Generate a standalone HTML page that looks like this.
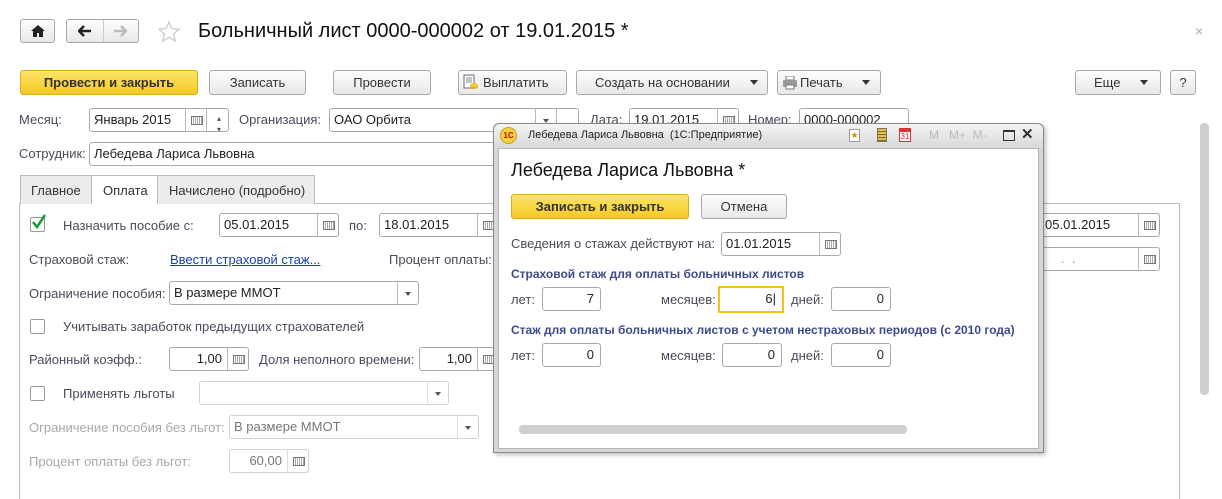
<!DOCTYPE html>
<html style="width:1222px;height:499px;overflow:hidden"><head><meta charset="utf-8"><style>
*{box-sizing:border-box;margin:0;padding:0}
body{width:1222px;height:499px;background:#fff;font-family:"Liberation Sans",Arial,sans-serif;font-size:13px;color:#4a4a5a;position:relative;overflow:hidden}
.a{position:absolute;white-space:nowrap}
.btn{position:absolute;height:25px;border:1px solid #a8a8a8;border-radius:3px;background:linear-gradient(#fdfdfd,#e8e8e8);color:#333;text-align:center;line-height:23px;font-size:13px}
.y{background:linear-gradient(#fde568,#f5c924);border-color:#d9ae1a;font-weight:bold;color:#333}
.in{position:absolute;height:24px;border:1px solid #a8a8a8;border-radius:3px;background:#fff;color:#222;line-height:22px;padding-left:4px;overflow:hidden}
.cal{position:absolute;top:0;right:0;width:21px;height:22px;border-left:1px solid #b8b8b8}
.cal:after{content:"";position:absolute;left:5px;top:7px;width:10px;height:7px;border:1px solid #777;background:repeating-linear-gradient(90deg,#fff 0 1px,#aaa 1px 2px)}
.dd{position:absolute;top:0;right:0;width:21px;height:22px;border-left:1px solid #b8b8b8}
.dd:after{content:"";position:absolute;left:7px;top:10px;border:3px solid transparent;border-top:4px solid #555}
.r{text-align:right;padding-right:26px}
.cb{position:absolute;width:15px;height:15px;border:1px solid #999;border-radius:2px;background:#fff}
.dis{color:#a8a8a8}
.dis .in,.in.dis{border-color:#d0d0d0;color:#777}
.h{color:#3f4a8a;font-weight:bold;font-size:12px}
.n{text-align:right;padding-right:6px}
</style></head><body>
<div class="btn" style="left:20px;top:19px;width:35px;height:24px"><svg width="14" height="12" viewBox="0 0 14 12" style="margin-top:5px"><path d="M7 0L0 6h2v6h4V8h2v4h4V6h2z" fill="#222"/></svg></div>
<div class="btn" style="left:66px;top:19px;width:73px;height:24px"></div>
<div class="a" style="left:103px;top:20px;width:1px;height:22px;background:#ccc"></div>
<svg class="a" style="left:78px;top:25px" width="14" height="12"><path d="M1 6h12M6 1L1 6l5 5" stroke="#222" stroke-width="2.5" fill="none"/></svg>
<svg class="a" style="left:113px;top:25px" width="14" height="12"><path d="M1 6h12M8 1l5 5-5 5" stroke="#bbb" stroke-width="2.5" fill="none"/></svg>
<svg class="a" style="left:157px;top:20px" width="24" height="24"><path d="M12 2l2.9 6.6 7.1.7-5.4 4.8 1.6 7-6.2-3.7-6.2 3.7 1.6-7L2 9.3l7.1-.7z" fill="none" stroke="#ccc" stroke-width="1.3"/></svg>
<div class="a" style="left:198px;top:20px;font-size:20px;color:#111">Больничный лист 0000-000002 от 19.01.2015 *</div>
<div class="a" style="left:1195px;top:23px;color:#aaa;font-size:14px">×</div>
<div class="btn y" style="left:20px;top:70px;width:178px">Провести и закрыть</div>
<div class="btn" style="left:209px;top:70px;width:97px">Записать</div>
<div class="btn" style="left:333px;top:70px;width:98px">Провести</div>
<div class="btn" style="left:458px;top:70px;width:109px;text-align:left;padding-left:24px">Выплатить</div>
<svg class="a" style="left:463px;top:74px" width="16" height="17"><rect x="1" y="1" width="10" height="13" fill="#fff" stroke="#667"/><path d="M3 4h6M3 6h6M3 8h6" stroke="#889"/><ellipse cx="11" cy="13" rx="4" ry="2" fill="#e0b020"/><ellipse cx="11" cy="11" rx="4" ry="2" fill="#f3c830"/></svg>
<div class="btn" style="left:576px;top:70px;width:192px;text-align:left;padding-left:18px">Создать на основании</div>
<div class="a" style="left:750px;top:80px;border:4px solid transparent;border-top:5px solid #333"></div>
<div class="btn" style="left:777px;top:70px;width:104px;text-align:left;padding-left:22px">Печать</div>
<svg class="a" style="left:782px;top:76px" width="16" height="14"><rect x="4" y="0" width="8" height="4" fill="#fff" stroke="#777"/><rect x="1" y="4" width="14" height="7" rx="1" fill="#999"/><rect x="4" y="9" width="8" height="4" fill="#fff" stroke="#777"/></svg>
<div class="a" style="left:862px;top:80px;border:4px solid transparent;border-top:5px solid #333"></div>
<div class="btn" style="left:1075px;top:70px;width:86px;text-align:left;padding-left:18px">Еще</div>
<div class="a" style="left:1140px;top:80px;border:4px solid transparent;border-top:5px solid #333"></div>
<div class="btn" style="left:1170px;top:70px;width:26px">?</div>
<div class="a" style="left:19px;top:112px">Месяц:</div>
<div class="in" style="left:89px;top:108px;width:140px">Январь 2015<div class="cal" style="right:21px;border-right:1px solid #b8b8b8;width:22px"></div><div class="a" style="right:7px;top:-1px;font-size:8px;color:#555">▴</div><div class="a" style="right:7px;top:10px;font-size:8px;color:#555">▾</div></div>
<div class="a" style="left:239px;top:112px">Организация:</div>
<div class="in" style="left:329px;top:108px;width:250px">ОАО Орбита<div class="dd" style="right:22px"></div><div class="a" style="right:0;top:0;width:22px;height:22px;border-left:1px solid #b8b8b8"></div></div>
<div class="a" style="left:590px;top:112px">Дата:</div>
<div class="in" style="left:629px;top:108px;width:110px">19.01.2015<div class="cal"></div></div>
<div class="a" style="left:748px;top:112px">Номер:</div>
<div class="in" style="left:799px;top:108px;width:110px">0000-000002</div>
<div class="a" style="left:19px;top:146px">Сотрудник:</div>
<div class="in" style="left:89px;top:142px;width:420px">Лебедева Лариса Львовна</div>
<div class="a" style="left:19px;top:203px;width:1161px;height:296px;border:1px solid #bbb;border-bottom:none"></div>
<div class="a" style="left:20px;top:175px;width:72px;height:29px;background:#ececec;border:1px solid #bbb;border-bottom:none;padding:7px 0 0 10px;color:#333">Главное</div>
<div class="a" style="left:91px;top:175px;width:67px;height:29px;background:#fff;border:1px solid #bbb;border-bottom:none;padding:7px 0 0 11px;color:#333">Оплата</div>
<div class="a" style="left:157px;top:175px;width:158px;height:29px;background:#ececec;border:1px solid #bbb;border-bottom:none;padding:7px 0 0 11px;color:#333">Начислено (подробно)</div>
<div class="cb" style="left:30px;top:217px"></div>
<svg class="a" style="left:31px;top:214px" width="16" height="16"><path d="M2 8l4 5 8-12" stroke="#1a9a3a" stroke-width="2.5" fill="none"/></svg>
<div class="a" style="left:63px;top:218px">Назначить пособие с:</div>
<div class="in" style="left:219px;top:213px;width:120px">05.01.2015<div class="cal"></div></div>
<div class="a" style="left:349px;top:218px">по:</div>
<div class="in" style="left:379px;top:213px;width:120px">18.01.2015<div class="cal"></div></div>
<div class="in" style="left:1000px;top:213px;width:160px;padding-left:44px">05.01.2015<div class="cal"></div></div>
<div class="in" style="left:1000px;top:247px;width:160px;padding-left:60px;color:#999">.&nbsp;&nbsp;.<div class="cal"></div></div>
<div class="a" style="left:29px;top:252px">Страховой стаж:</div>
<div class="a" style="left:170px;top:252px;color:#1a3fb0;text-decoration:underline">Ввести страховой стаж...</div>
<div class="a" style="left:389px;top:252px">Процент оплаты:</div>
<div class="a" style="left:29px;top:286px">Ограничение пособия:</div>
<div class="in" style="left:169px;top:281px;width:250px">В размере ММОТ<div class="dd"></div></div>
<div class="cb" style="left:30px;top:319px"></div>
<div class="a" style="left:63px;top:319px">Учитывать заработок предыдущих страхователей</div>
<div class="a" style="left:29px;top:352px">Районный коэфф.:</div>
<div class="in r" style="left:169px;top:347px;width:80px">1,00<div class="cal"></div></div>
<div class="a" style="left:259px;top:352px">Доля неполного времени:</div>
<div class="in r" style="left:419px;top:347px;width:80px">1,00<div class="cal"></div></div>
<div class="cb" style="left:30px;top:386px"></div>
<div class="a" style="left:63px;top:386px">Применять льготы</div>
<div class="in dis" style="left:199px;top:381px;width:250px"><div class="dd" style="border-color:#ddd"></div></div>
<div class="a dis" style="left:29px;top:420px">Ограничение пособия без льгот:</div>
<div class="in dis" style="left:229px;top:415px;width:250px">В размере ММОТ<div class="dd" style="border-color:#ddd"></div></div>
<div class="a dis" style="left:29px;top:454px">Процент оплаты без льгот:</div>
<div class="in dis r" style="left:229px;top:449px;width:80px">60,00<div class="cal" style="border-color:#ddd"></div></div>
<div class="a" style="left:1200px;top:123px;width:9px;height:272px;background:#cfcfcf;border-radius:4px"></div>
<div class="a" style="left:493px;top:123px;width:551px;height:330px;background:#d6d6d6;border:1px solid #8a8a8a;border-radius:6px 6px 0 0;box-shadow:2px 2px 4px rgba(0,0,0,.25)">
 <div class="a" style="left:0;top:0;width:549px;height:24px;background:linear-gradient(#f4f4f4,#d8d8d8);border-radius:6px 6px 0 0"></div>
 <div class="a" style="left:4px;top:24px;width:541px;height:301px;background:#fff;border:1px solid #b5b5b5"></div>
</div>
<div class="a" style="left:500px;top:127px;width:17px;height:17px;border-radius:50%;background:#f6d340;border:1px solid #c9a020;color:#c00;font-size:8px;font-weight:bold;text-align:center;line-height:15px">1С</div>
<div class="a" style="left:528px;top:129px;font-size:11px;color:#222">Лебедева Лариса Львовна&nbsp; (1С:Предприятие)</div>
<div class="a" style="left:849px;top:129px;width:11px;height:13px;border:1px solid #999;background:#fff;font-size:9px;color:#c90;text-align:center;line-height:11px">★</div>
<div class="a" style="left:877px;top:128px;width:10px;height:14px;background:repeating-linear-gradient(#e8c050 0 2px,#7a6a30 2px 3px);border:1px solid #776"></div>
<div class="a" style="left:899px;top:128px;width:12px;height:14px;background:#fff;border:1px solid #c33;border-top:4px solid #d33;color:#c22;font-size:8px;text-align:center;line-height:10px">31</div>
<div class="a" style="left:929px;top:128px;font-size:12px;color:#bbb">M&nbsp;&nbsp; M+&nbsp; M-</div>
<div class="a" style="left:1003px;top:130px;width:12px;height:11px;border:1px solid #333;border-top:2px solid #333"></div>
<div class="a" style="left:1021px;top:125px;font-size:15px;color:#333;font-weight:bold">✕</div>
<div class="a" style="left:511px;top:160px;font-size:18px;color:#111">Лебедева Лариса Львовна *</div>
<div class="btn y" style="left:511px;top:194px;width:178px">Записать и закрыть</div>
<div class="btn" style="left:701px;top:194px;width:86px">Отмена</div>
<div class="a" style="left:511px;top:236px">Сведения о стажах действуют на:</div>
<div class="in" style="left:721px;top:232px;width:120px">01.01.2015<div class="cal"></div></div>
<div class="a h" style="left:511px;top:267px">Страховой стаж для оплаты больничных листов</div>
<div class="a" style="left:511px;top:292px">лет:</div>
<div class="in n" style="left:542px;top:287px;width:59px">7</div>
<div class="a" style="left:661px;top:292px">месяцев:</div>
<div class="in n" style="left:718px;top:286px;width:66px;height:27px;border:2px solid #f1c21b;border-radius:0">6|</div>
<div class="a" style="left:791px;top:292px">дней:</div>
<div class="in n" style="left:831px;top:287px;width:60px">0</div>
<div class="a h" style="left:511px;top:323px">Стаж для оплаты больничных листов с учетом нестраховых периодов (с 2010 года)</div>
<div class="a" style="left:511px;top:348px">лет:</div>
<div class="in n" style="left:542px;top:343px;width:59px">0</div>
<div class="a" style="left:661px;top:348px">месяцев:</div>
<div class="in n" style="left:722px;top:343px;width:60px">0</div>
<div class="a" style="left:791px;top:348px">дней:</div>
<div class="in n" style="left:831px;top:343px;width:60px">0</div>
<div class="a" style="left:519px;top:425px;width:388px;height:9px;background:#cfcfcf;border-radius:4px"></div>
</body></html>
